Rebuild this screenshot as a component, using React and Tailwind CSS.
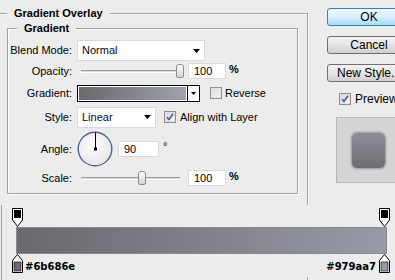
import React from "react";

const Caret = () => (
  <svg width="7" height="4" viewBox="0 0 7 4">
    <path d="M0 0h7L3.5 4z" fill="#000" />
  </svg>
);

const Select = ({ value, width }) => (
  <div
    className={`ml-[5px] flex h-[21px] ${width} items-center justify-between border border-[#dadada] bg-white pl-[4px] pr-[4px] text-[#0a0a1a]`}
  >
    <span>{value}</span>
    <Caret />
  </div>
);

const Slider = ({ thumb }) => (
  <div className="relative ml-[9px] h-[14px] w-[102px]">
    <div className="absolute left-0 top-[6px] h-[3px] w-[99px] border-t border-b border-t-[#9a9a9a] border-b-white bg-[#dedede]" />
    <div
      className={`absolute top-0 ${thumb} h-[14px] w-[8px] rounded-t-[3px] rounded-b-[2px] border border-[#8c8c8c] bg-gradient-to-b from-white to-[#d4d4d4]`}
    />
  </div>
);

const NumberBox = ({ value, width, ml }) => (
  <div
    className={`${ml} flex h-[16px] ${width} items-center border border-[#dadada] bg-white pl-[5px] text-[#000]`}
  >
    {value}
  </div>
);

const Checkbox = ({ checked }) => (
  <div className="flex h-[12px] w-[12px] items-center justify-center border border-[#8e8f8f] bg-white">
    <div className="flex h-[10px] w-[10px] items-center justify-center border border-[#e2e2e2] bg-gradient-to-br from-[#d8d8d8] to-[#f8f8f8]">
      {checked && (
        <svg width="8" height="8" viewBox="0 0 8 8">
          <path d="M1 4.2l2 2.3L7 0.8" fill="none" stroke="#3d5a98" strokeWidth="1.6" />
        </svg>
      )}
    </div>
  </div>
);

const Row = ({ label, h, children }) => (
  <div className={`flex ${h} items-center`}>
    <div className="w-[64px] text-right">{label}</div>
    {children}
  </div>
);

const Stop = ({ color, up }) =>
  up ? (
    <svg width="11" height="19" viewBox="0 0 11 19">
      <path d="M5.5 0.5L10.5 6.5V18.5H0.5V6.5Z" fill="#fff" stroke="#000" />
      <rect x="2" y="8" width="7" height="9" fill={color} stroke="#000" strokeWidth="0.6" />
    </svg>
  ) : (
    <svg width="11" height="19" viewBox="0 0 11 19">
      <path d="M0.5 0.5H10.5V12L5.5 18.5L0.5 12Z" fill="#fff" stroke="#000" />
      <rect x="2" y="2" width="7" height="8" fill="#000" />
    </svg>
  );

const Button = ({ children, primary }) => (
  <div
    className={`mb-[10px] ml-[19px] flex h-[18px] w-[84px] shrink-0 items-center justify-center rounded-[3px] border text-[12px] text-[#000] ${
      primary
        ? "border-[#3c7fb1] bg-gradient-to-b from-[#eaf6fd] via-[#d9f0fc] to-[#a7d9f5]"
        : "border-[#707070] bg-gradient-to-b from-[#f2f2f2] via-[#e6e6e6] to-[#cfcfcf]"
    }`}
  >
    {children}
  </div>
);

export default function App() {
  return (
    <div className="flex h-[280px] w-[395px] flex-col overflow-hidden bg-[#ececec] font-['Liberation_Sans',Arial,sans-serif] text-[11px] text-[#000]">
      <div className="flex h-[205px] shrink-0">
        {/* Gradient Overlay group */}
        <div className="w-[308px] shrink-0">
          <div className="mt-[13px] h-[192px] border-t border-r border-[#a0a0a0] shadow-[inset_0_1px_0_#fff,1px_0_0_#fff]">
            <div className="-mt-[8px] ml-[7px] w-fit bg-[#ececec] px-[7px] font-bold leading-[14px]">
              Gradient Overlay
            </div>
            <div className="ml-[7px] mt-[8px] h-[166px] w-[291px] border border-[#a0a0a0] shadow-[inset_1px_1px_0_#fff,1px_1px_0_#fff]">
              <div className="-mt-[8px] ml-[9px] w-fit bg-[#ececec] px-[7px] font-bold leading-[14px]">
                Gradient
              </div>
              <div className="mt-[5px] flex flex-col">
                <Row label="Blend Mode:" h="h-[21px]">
                  <Select value="Normal" width="w-[128px]" />
                </Row>
                <Row label="Opacity:" h="h-[20px]">
                  <Slider thumb="left-[95px]" />
                  <NumberBox value="100" width="w-[38px]" ml="ml-[5px]" />
                  <span className="ml-[3px] -mt-[3px] font-bold">%</span>
                </Row>
                <Row label="Gradient:" h="h-[24px]">
                  <div className="ml-[5px] flex h-[17px] w-[123px] border border-black bg-white">
                    <div className="m-px flex-1 bg-gradient-to-r from-[#6b686e] to-[#9fa2ad]" />
                    <div className="flex w-[12px] items-center justify-center border-l border-black">
                      <svg width="5" height="3" viewBox="0 0 5 3">
                        <path d="M0 0h5L2.5 3z" fill="#000" />
                      </svg>
                    </div>
                  </div>
                  <div className="ml-[10px]">
                    <Checkbox />
                  </div>
                  <span className="ml-[3px]">Reverse</span>
                </Row>
                <Row label="Style:" h="h-[24px]">
                  <Select value="Linear" width="w-[79px]" />
                  <div className="ml-[8px]">
                    <Checkbox checked />
                  </div>
                  <span className="ml-[4px]">Align with Layer</span>
                </Row>
                <Row label="Angle:" h="h-[40px]">
                  <svg className="ml-[5px]" width="36" height="36" viewBox="0 0 36 36">
                    <defs>
                      <radialGradient id="dial" cx="0.45" cy="0.4" r="0.6">
                        <stop offset="0" stopColor="#ffffff" />
                        <stop offset="1" stopColor="#e6e6e6" />
                      </radialGradient>
                    </defs>
                    <circle cx="18" cy="18" r="16.8" fill="url(#dial)" stroke="#52638f" strokeWidth="1.4" />
                    <line x1="18.5" y1="1.5" x2="18.5" y2="18" stroke="#000" strokeWidth="1" />
                    <rect x="17" y="16.5" width="3" height="3" fill="#000" />
                  </svg>
                  <NumberBox value="90" width="w-[41px]" ml="ml-[5px]" />
                  <span className="ml-[4px] -mt-[6px]">°</span>
                </Row>
                <Row label="Scale:" h="h-[18px]">
                  <Slider thumb="left-[57px]" />
                  <NumberBox value="100" width="w-[38px]" ml="ml-[5px]" />
                  <span className="ml-[3px] -mt-[3px] font-bold">%</span>
                </Row>
              </div>
            </div>
          </div>
        </div>

        {/* Right column */}
        <div className="flex min-w-0 flex-1 flex-col pt-[8px]">
          <Button primary>OK</Button>
          <Button>Cancel</Button>
          <Button>New Style...</Button>
          <div className="ml-[31px] mt-[-2px] flex items-center">
            <Checkbox checked />
            <span className="ml-[4px] text-[12px]">Preview</span>
          </div>
          <div className="ml-[28px] mt-[9px] h-[66px] w-[90px] shrink-0 border border-[#b8b8b8] bg-[#d5d5d5] pl-[15px] pt-[15px]">
            <div className="h-[35px] w-[33px] rounded-[5px] bg-gradient-to-b from-[#8e8d96] to-[#6e6d73] shadow-[0_0_2px_1px_rgba(0,0,0,0.3)]" />
          </div>
        </div>
      </div>

      {/* Gradient editor */}
      <div className="ml-[1px] flex flex-1 flex-col border-l border-[#a0a0a0]">
        <div className="mt-[3px] flex justify-between pl-[10px] pr-[5px]">
          <Stop />
          <Stop />
        </div>
        <div className="ml-[14px] h-[27px] w-[371px] border border-[#8a8a8a] bg-gradient-to-r from-[#6b686e] to-[#979aa7]" />
        <div className="flex items-center justify-between pl-[10px] pr-[5px]">
          <div className="flex items-end">
            <Stop up color="#6b686e" />
            <span className="mb-[-1px] ml-[2px] font-['DejaVu_Sans',sans-serif] text-[10px] font-bold">#6b686e</span>
          </div>
          <div className="flex items-end">
            <span className="mb-[-1px] mr-[3px] font-['DejaVu_Sans',sans-serif] text-[10px] font-bold">#979aa7</span>
            <Stop up color="#979aa7" />
          </div>
        </div>
        <div className="ml-[305px] mt-[4px] h-[4px] w-px bg-[#a0a0a0]" />
      </div>
    </div>
  );
}
